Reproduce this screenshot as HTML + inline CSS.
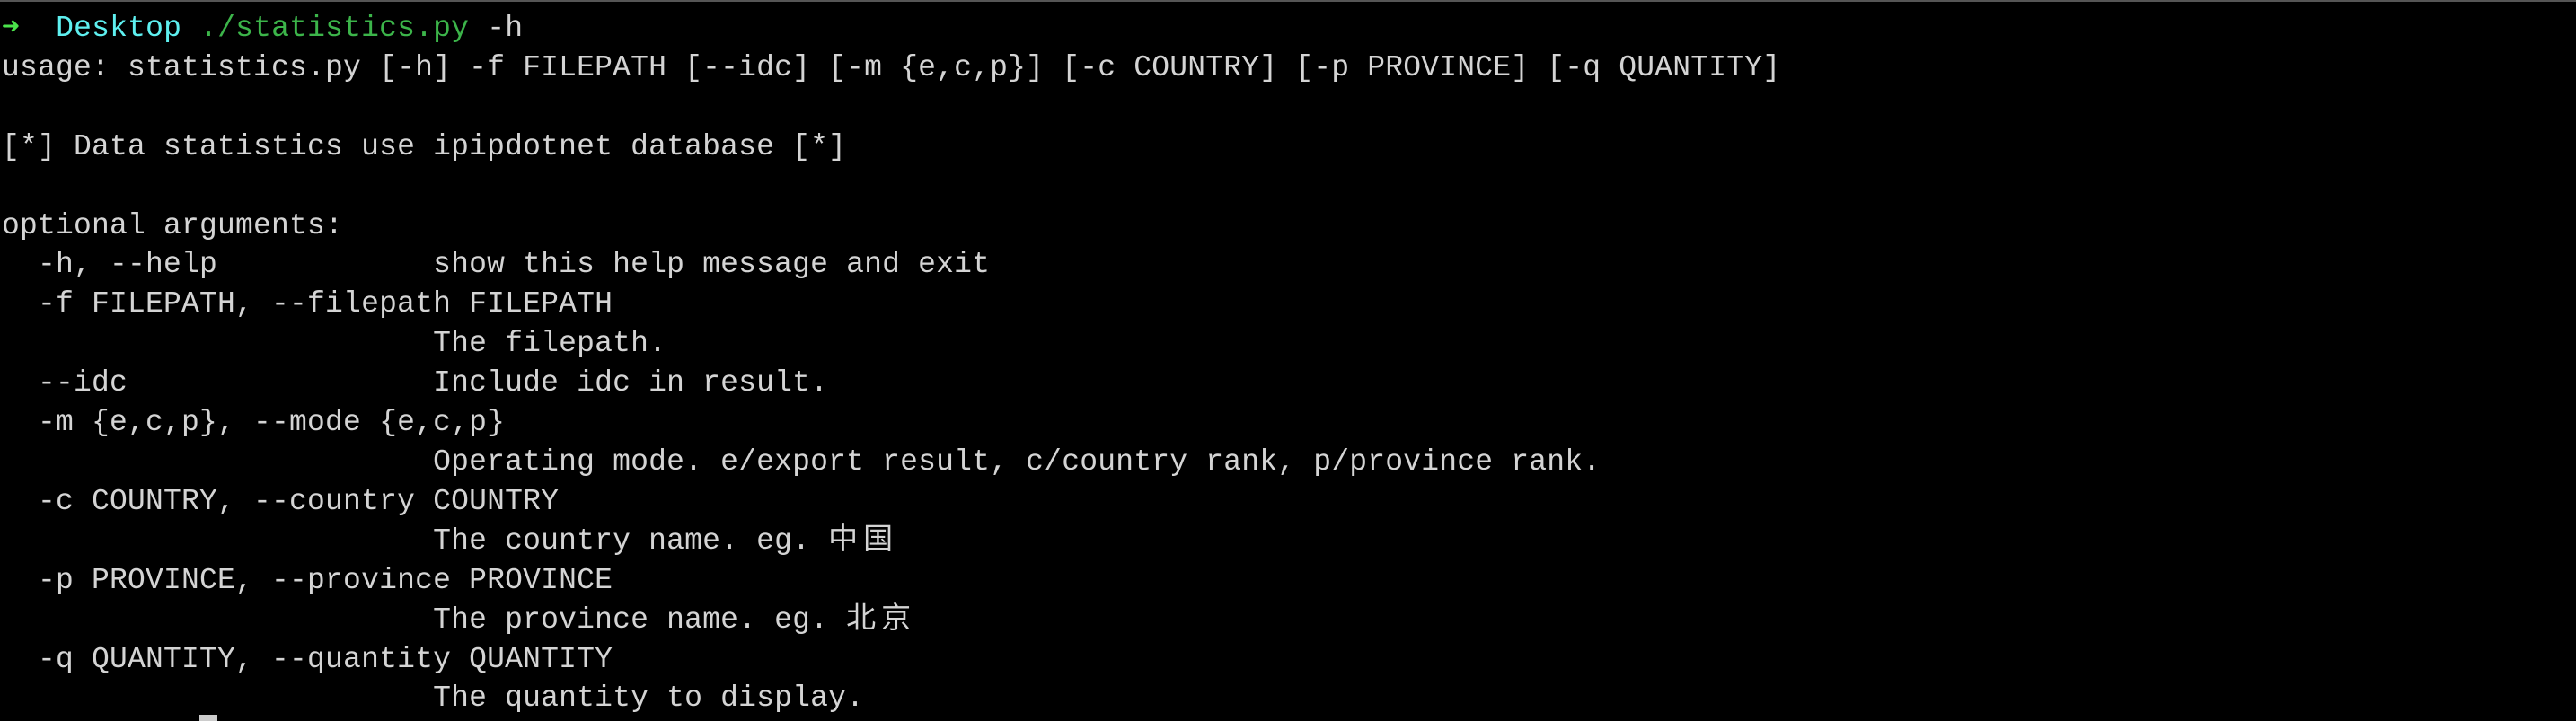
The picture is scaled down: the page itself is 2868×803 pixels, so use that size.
<!DOCTYPE html>
<html><head><meta charset="utf-8"><style>
html,body{margin:0;padding:0;background:#000;width:2868px;height:803px;overflow:hidden}
.t{position:absolute;left:2px;top:10px;margin:0;font-family:"Liberation Mono","Noto Sans CJK SC",monospace;font-size:33px;letter-spacing:0.2px;line-height:43.9px;color:#d4d4d4;white-space:pre}
.g{color:#4be34b}.c{color:#5ef0f0}.p{color:#3cb54a}
.k{letter-spacing:6px}
.top{position:absolute;left:0;top:0;width:2868px;height:2px;background:#555}
.cur{position:absolute;left:222px;top:796px;width:20px;height:7px;background:#ccc}
</style></head><body>
<div class="top"></div>
<pre class="t"><span class="g">➜</span>  <span class="c">Desktop</span> <span class="p">./statistics.py</span> -h
usage: statistics.py [-h] -f FILEPATH [--idc] [-m {e,c,p}] [-c COUNTRY] [-p PROVINCE] [-q QUANTITY]

[*] Data statistics use ipipdotnet database [*]

optional arguments:
  -h, --help            show this help message and exit
  -f FILEPATH, --filepath FILEPATH
                        The filepath.
  --idc                 Include idc in result.
  -m {e,c,p}, --mode {e,c,p}
                        Operating mode. e/export result, c/country rank, p/province rank.
  -c COUNTRY, --country COUNTRY
                        The country name. eg. <span class="k">中国</span>
  -p PROVINCE, --province PROVINCE
                        The province name. eg. <span class="k">北京</span>
  -q QUANTITY, --quantity QUANTITY
                        The quantity to display.</pre>
<div class="cur"></div>
</body></html>
